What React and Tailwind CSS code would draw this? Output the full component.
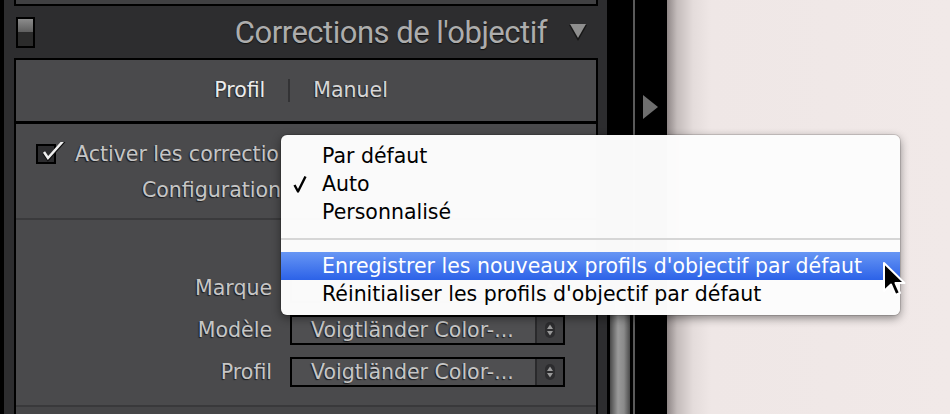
export default function App() {
  const label = "text-[20.5px] leading-none text-[#c6c6c6] [text-shadow:-1px_1px_1px_#1c1c1e]";
  return (
    <div className="relative flex h-[414px] w-[950px] overflow-hidden bg-black font-['DejaVu_Sans','Liberation_Sans',sans-serif]">
      <div className="w-[4px] shrink-0 bg-black" />
      {/* panel column */}
      <div className="flex w-[603px] shrink-0 flex-col bg-[#2d2d2f]">
        <div className="ml-[10px] mr-[9px] h-[6px] shrink-0 border-x-2 border-b-2 border-black bg-[#404042]" />
        {/* header */}
        <div className="flex h-[52px] shrink-0 items-center pl-[12px] pr-[19px]">
          <div className="flex h-[31px] w-[19px] flex-col border-2 border-black">
            <div className="flex-1 bg-[linear-gradient(#8c8c8c,#5e5e5e)]" />
            <div className="flex-1 bg-[#2b2b2b]" />
          </div>
          <div className="flex-1" />
          <span className="font-['Roboto',sans-serif] text-[31px] leading-none tracking-[-0.5px] text-[#adadad] [text-shadow:0_1px_1px_#111]">
            Corrections de l'objectif
          </span>
          <svg className="ml-[21px]" width="20" height="20" viewBox="0 0 20 20">
            <polygon points="1,3 19,3 10,19" fill="#161616" />
            <polygon points="2,2 18,2 10,16" fill="#8e8e8e" />
          </svg>
        </div>
        {/* panel body */}
        <div className="ml-[10px] mr-[9px] flex flex-1 flex-col border-x-2 border-t-2 border-black bg-[#4a4a4c]">
          {/* tabs */}
          <div className="flex h-[64px] shrink-0 items-center justify-center gap-[23px] border-b-[3px] border-black pr-[10px]">
            <span className="text-[20.5px] leading-none text-[#ececec] [text-shadow:-1px_1px_1px_#222]">Profil</span>
            <div className="h-[23px] w-[2px] bg-[#333335]" />
            <span className="text-[20.5px] leading-none text-[#d6d6d6] [text-shadow:-1px_1px_1px_#222]">Manuel</span>
          </div>
          {/* main */}
          <div className="flex h-[96px] shrink-0 flex-col gap-[12px] border-b-2 border-[#3a3a3c] pt-[18px]">
            <div className="flex h-[24px] w-[265px] items-center overflow-hidden pl-[20px]">
              <div className="relative h-[20px] w-[20px] shrink-0 border-2 border-black bg-[#2c2c2e]">
                <svg className="absolute left-[2px] top-[-7px]" width="26" height="24" viewBox="0 0 26 24">
                  <path d="M4 14 L8 20 L24 2" stroke="#111" strokeWidth="3.5" fill="none" />
                  <path d="M4 13 L8 19 L24 1" stroke="#f0f0f0" strokeWidth="2.5" fill="none" />
                </svg>
              </div>
              <span className={`ml-[19px] whitespace-nowrap ${label}`}>Activer les correctio</span>
            </div>
            <div className="flex h-[24px] items-center">
              <span className={`w-[265px] text-right ${label}`}>Configuration</span>
            </div>
          </div>
          {/* lower */}
          <div className="flex shrink-0 flex-col gap-[12px] border-b-2 border-[#39393b] pb-[18px] pt-[53px]">
            {["Marque", "Modèle", "Profil"].map((l, i) => (
              <div key={l} className="flex h-[30px] items-center gap-[18px]">
                <span className={`w-[256px] text-right ${label}`}>{l}</span>
                <div className="flex h-[30px] w-[275px] border-2 border-black bg-[#4f4f51]">
                  <div className="flex flex-1 items-center pl-[19px]">
                    {i > 0 && <span className={label}>Voigtländer Color-...</span>}
                  </div>
                  <div className="flex w-[28px] items-center justify-center border-l-2 border-[#2a2a2c] bg-[#3e3e40]">
                    <svg width="12" height="18" viewBox="0 0 12 18">
                      <rect x="1" y="1" width="10" height="16" rx="5" fill="#2c2c2e" />
                      <polygon points="3,8 9,8 6,3.5" fill="#9a9a9a" />
                      <polygon points="3,10 9,10 6,14.5" fill="#9a9a9a" />
                    </svg>
                  </div>
                </div>
              </div>
            ))}
          </div>
          <div className="flex-1 bg-[#464648]" />
        </div>
      </div>
      {/* scrollbar */}
      <div className="flex w-[26px] shrink-0 flex-col bg-black">
        <div className="flex-1" />
        <div className="mx-[3px] h-[114px] bg-[linear-gradient(to_right,#4a4a4a,#9a9a9a_40%,#8a8a8a_70%,#4a4a4a)]" />
      </div>
      <div className="w-[2px] shrink-0 bg-[#5a5a5a]" />
      {/* collapse column */}
      <div className="flex w-[32px] shrink-0 flex-col bg-black pl-[8px] pt-[95px]">
        <svg width="16" height="24" viewBox="0 0 16 24">
          <polygon points="0,0 15,12 0,24" fill="#6e6e6e" />
        </svg>
      </div>
      {/* right area */}
      <div className="flex-1 bg-[linear-gradient(to_right,#8e8686_0px,#c4bcbb_10px,#e4dcdb_26px,#efe7e6_44px,#f1e9e8)]" />

      {/* popup menu */}
      <div className="absolute left-[281px] top-[135px] w-[619px] rounded-[6px] bg-[rgba(252,252,252,0.99)] py-[7px] text-[20.5px] leading-none text-black shadow-[0_3px_10px_rgba(0,0,0,0.45),0_0_0_1px_rgba(0,0,0,0.12)]">
        <div className="flex h-[28px] items-center pl-[41px]">Par défaut</div>
        <div className="flex h-[28px] items-center">
          <div className="w-[41px] pl-[12px]">
            <svg width="14" height="18" viewBox="0 0 14 18">
              <path d="M1.5 10 L5 16.5 L12.5 1.5" stroke="#000" strokeWidth="2.4" fill="none" strokeLinejoin="round" />
            </svg>
          </div>
          <span>Auto</span>
        </div>
        <div className="flex h-[28px] items-center pl-[41px]">Personnalisé</div>
        <div className="my-[12px] h-[2px] bg-[#d6d6d6]" />
        <div className="flex h-[28px] items-center bg-[linear-gradient(#6796f4,#2c62e8)] pl-[41px] text-white">
          Enregistrer les nouveaux profils d'objectif par défaut
        </div>
        <div className="flex h-[28px] items-center pl-[41px]">Réinitialiser les profils d'objectif par défaut</div>
      </div>

      {/* cursor */}
      <svg className="absolute left-[882px] top-[261px]" width="26" height="38" viewBox="0 0 26 38">
        <path d="M2 2 L2 30 L9 23.5 L13.5 34 L18 32 L13.5 22 L22.5 22 Z" fill="#000" stroke="#fff" strokeWidth="2" strokeLinejoin="round" />
      </svg>
    </div>
  );
}
